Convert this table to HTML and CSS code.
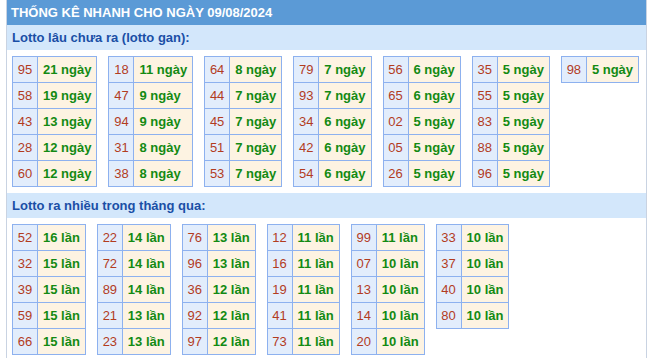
FILE: index.html
```html
<!DOCTYPE html>
<html lang="vi">
<head>
<meta charset="utf-8">
<title>Thống kê nhanh</title>
<link rel="stylesheet" href="styles.css">
</head>
<body>
<div class="box">
  <div class="title">THỐNG KÊ NHANH CHO NGÀY 09/08/2024</div>
  <div class="sub">Lotto lâu chưa ra (lotto gan):</div>
  <div class="grid">
    <table><tr><td class="n">95</td><td class="v">21 ngày</td></tr><tr><td class="n">58</td><td class="v">19 ngày</td></tr><tr><td class="n">43</td><td class="v">13 ngày</td></tr><tr><td class="n">28</td><td class="v">12 ngày</td></tr><tr><td class="n">60</td><td class="v">12 ngày</td></tr></table>
    <table><tr><td class="n">18</td><td class="v">11 ngày</td></tr><tr><td class="n">47</td><td class="v">9 ngày</td></tr><tr><td class="n">94</td><td class="v">9 ngày</td></tr><tr><td class="n">31</td><td class="v">8 ngày</td></tr><tr><td class="n">38</td><td class="v">8 ngày</td></tr></table>
    <table><tr><td class="n">64</td><td class="v">8 ngày</td></tr><tr><td class="n">44</td><td class="v">7 ngày</td></tr><tr><td class="n">45</td><td class="v">7 ngày</td></tr><tr><td class="n">51</td><td class="v">7 ngày</td></tr><tr><td class="n">53</td><td class="v">7 ngày</td></tr></table>
    <table><tr><td class="n">79</td><td class="v">7 ngày</td></tr><tr><td class="n">93</td><td class="v">7 ngày</td></tr><tr><td class="n">34</td><td class="v">6 ngày</td></tr><tr><td class="n">42</td><td class="v">6 ngày</td></tr><tr><td class="n">54</td><td class="v">6 ngày</td></tr></table>
    <table><tr><td class="n">56</td><td class="v">6 ngày</td></tr><tr><td class="n">65</td><td class="v">6 ngày</td></tr><tr><td class="n">02</td><td class="v">5 ngày</td></tr><tr><td class="n">05</td><td class="v">5 ngày</td></tr><tr><td class="n">26</td><td class="v">5 ngày</td></tr></table>
    <table><tr><td class="n">35</td><td class="v">5 ngày</td></tr><tr><td class="n">55</td><td class="v">5 ngày</td></tr><tr><td class="n">83</td><td class="v">5 ngày</td></tr><tr><td class="n">88</td><td class="v">5 ngày</td></tr><tr><td class="n">96</td><td class="v">5 ngày</td></tr></table>
    <table><tr><td class="n">98</td><td class="v">5 ngày</td></tr></table>
  </div>
  <div class="sub">Lotto ra nhiều trong tháng qua:</div>
  <div class="grid">
    <table><tr><td class="n">52</td><td class="v">16 lần</td></tr><tr><td class="n">32</td><td class="v">15 lần</td></tr><tr><td class="n">39</td><td class="v">15 lần</td></tr><tr><td class="n">59</td><td class="v">15 lần</td></tr><tr><td class="n">66</td><td class="v">15 lần</td></tr></table>
    <table><tr><td class="n">22</td><td class="v">14 lần</td></tr><tr><td class="n">72</td><td class="v">14 lần</td></tr><tr><td class="n">89</td><td class="v">14 lần</td></tr><tr><td class="n">21</td><td class="v">13 lần</td></tr><tr><td class="n">23</td><td class="v">13 lần</td></tr></table>
    <table><tr><td class="n">76</td><td class="v">13 lần</td></tr><tr><td class="n">96</td><td class="v">13 lần</td></tr><tr><td class="n">36</td><td class="v">12 lần</td></tr><tr><td class="n">92</td><td class="v">12 lần</td></tr><tr><td class="n">97</td><td class="v">12 lần</td></tr></table>
    <table><tr><td class="n">12</td><td class="v">11 lần</td></tr><tr><td class="n">16</td><td class="v">11 lần</td></tr><tr><td class="n">19</td><td class="v">11 lần</td></tr><tr><td class="n">41</td><td class="v">11 lần</td></tr><tr><td class="n">73</td><td class="v">11 lần</td></tr></table>
    <table><tr><td class="n">99</td><td class="v">11 lần</td></tr><tr><td class="n">07</td><td class="v">10 lần</td></tr><tr><td class="n">13</td><td class="v">10 lần</td></tr><tr><td class="n">14</td><td class="v">10 lần</td></tr><tr><td class="n">20</td><td class="v">10 lần</td></tr></table>
    <table><tr><td class="n">33</td><td class="v">10 lần</td></tr><tr><td class="n">37</td><td class="v">10 lần</td></tr><tr><td class="n">40</td><td class="v">10 lần</td></tr><tr><td class="n">80</td><td class="v">10 lần</td></tr></table>
  </div>
</div>
</body>
</html>
```
FILE: styles.css
```css
html, body {
  margin: 0;
  padding: 0;
  background: #ffffff;
}
body {
  padding: 0 6px;
  font-family: "Liberation Sans", Arial, sans-serif;
}
.box {
  border-left: 1px solid #c9d3e2;
  border-right: 1px solid #c9d3e2;
  min-height: 358px;
  box-sizing: border-box;
}
.title {
  background: #5b9ad6;
  color: #ffffff;
  font-weight: bold;
  font-size: 13px;
  height: 25px;
  line-height: 25px;
  padding-left: 4px;
}
.sub {
  background: #d3e7fb;
  color: #1a4fa6;
  font-weight: bold;
  font-size: 13px;
  height: 25px;
  line-height: 25px;
  padding-left: 5px;
}
.grid {
  display: flex;
  flex-wrap: wrap;
  align-items: flex-start;
  gap: 11px;
  padding: 6px 5px;
}
table {
  border-collapse: collapse;
}
td {
  border: 1px solid #8db1ef;
  height: 25px;
  padding: 0;
  font-size: 13px;
  line-height: 16px;
  box-sizing: content-box;
}
td.n {
  background: #e2edfc;
  color: #b23c1f;
  width: 24px;
  text-align: center;
}
td.v {
  background: #fdf3e2;
  color: #138a13;
  font-weight: bold;
  padding: 0 5px;
}
```
